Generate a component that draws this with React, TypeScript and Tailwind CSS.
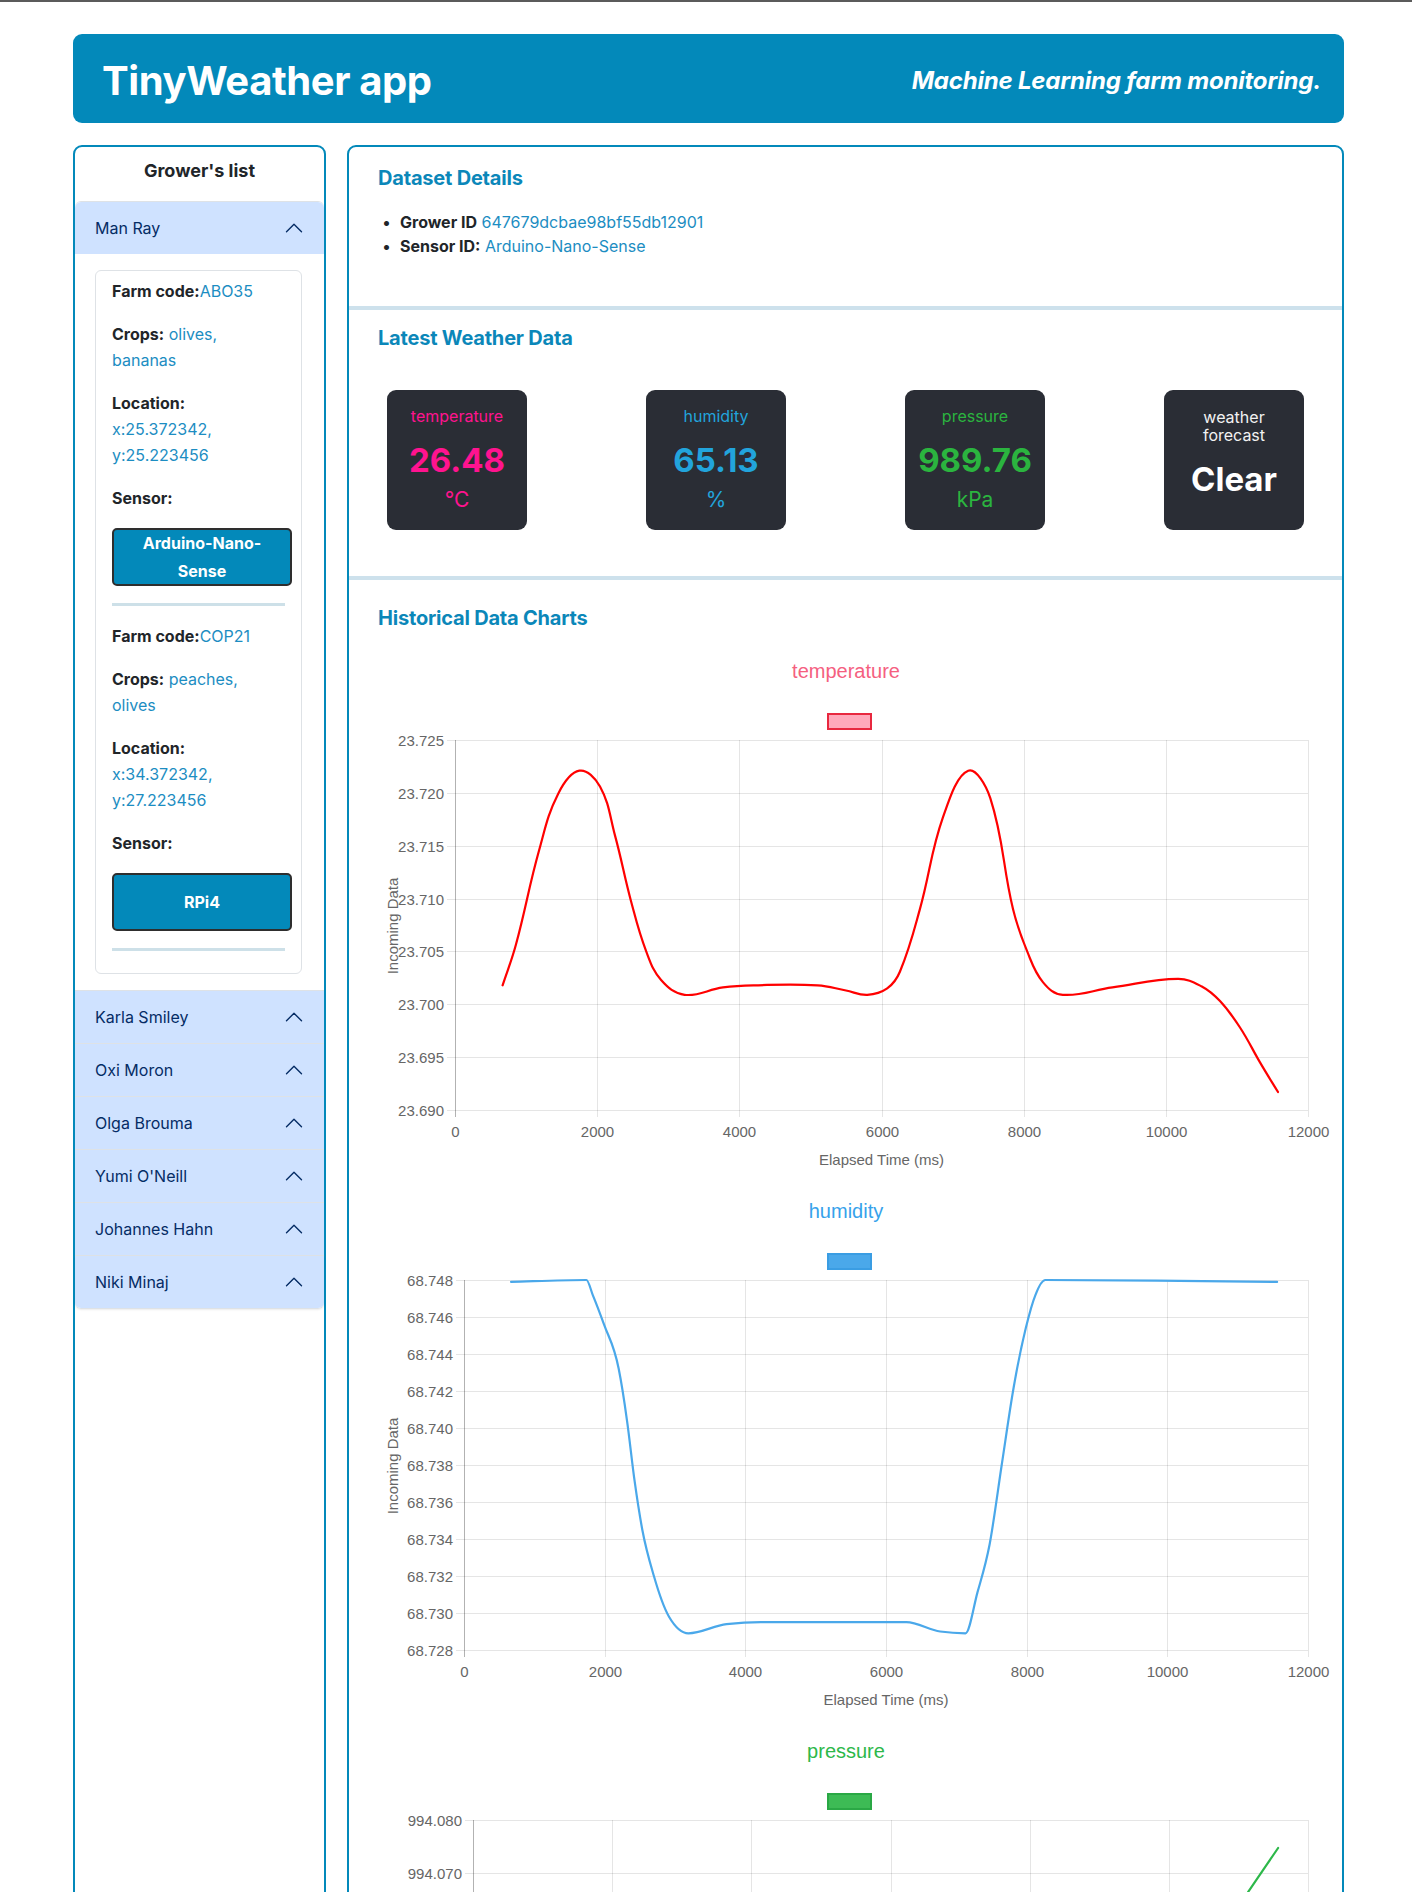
import React from "react";

type Pt = [number, number];

const growers = [
  {
    name: "Man Ray",
    farms: [
      { code: "ABO35", crops: ["olives,", "bananas"], loc: ["x:25.372342,", "y:25.223456"], sensor: "Arduino-Nano-Sense" },
      { code: "COP21", crops: ["peaches,", "olives"], loc: ["x:34.372342,", "y:27.223456"], sensor: "RPi4" },
    ],
  },
  { name: "Karla Smiley", farms: [] },
  { name: "Oxi Moron", farms: [] },
  { name: "Olga Brouma", farms: [] },
  { name: "Yumi O'Neill", farms: [] },
  { name: "Johannes Hahn", farms: [] },
  { name: "Niki Minaj", farms: [] },
];

const readings = [
  { label: "temperature", value: "26.48", unit: "°C", color: "text-[#ff138f]" },
  { label: "humidity", value: "65.13", unit: "%", color: "text-[#22a4dc]" },
  { label: "pressure", value: "989.76", unit: "kPa", color: "text-[#2bb43f]" },
];

const f1 = (v: number) => v.toFixed(1);

// cubic spline like chart.js' default line tension (0.4)
function splinePath(p: Pt[], t = 0.4) {
  const cps = p.map((cur, i) => {
    const prev = p[i - 1] || cur;
    const next = p[i + 1] || cur;
    const d01 = Math.hypot(cur[0] - prev[0], cur[1] - prev[1]);
    const d12 = Math.hypot(next[0] - cur[0], next[1] - cur[1]);
    const sum = d01 + d12 || 1;
    const fa = (t * d01) / sum;
    const fb = (t * d12) / sum;
    return {
      before: [cur[0] - fa * (next[0] - prev[0]), cur[1] - fa * (next[1] - prev[1])] as Pt,
      after: [cur[0] + fb * (next[0] - prev[0]), cur[1] + fb * (next[1] - prev[1])] as Pt,
    };
  });
  let d = `M${f1(p[0][0])},${f1(p[0][1])}`;
  for (let i = 0; i < p.length - 1; i++) {
    const a = cps[i].after;
    const b = cps[i + 1].before;
    d += ` C${f1(a[0])},${f1(a[1])} ${f1(b[0])},${f1(b[1])} ${f1(p[i + 1][0])},${f1(p[i + 1][1])}`;
  }
  return d;
}

// monotone variant, no overshoot on flat stretches
function monotonePath(p: Pt[]) {
  const n = p.length;
  const s: number[] = [];
  for (let i = 0; i < n - 1; i++) s.push((p[i + 1][1] - p[i][1]) / (p[i + 1][0] - p[i][0]));
  const m: number[] = new Array(n);
  m[0] = s[0];
  m[n - 1] = s[n - 2];
  for (let i = 1; i < n - 1; i++) {
    const h0 = p[i][0] - p[i - 1][0];
    const h1 = p[i + 1][0] - p[i][0];
    const s0 = s[i - 1];
    const s1 = s[i];
    if (s0 * s1 <= 0) m[i] = 0;
    else {
      const q = (s0 * h1 + s1 * h0) / (h0 + h1);
      m[i] = (Math.sign(s0) + Math.sign(s1)) * Math.min(Math.abs(s0), Math.abs(s1), 0.5 * Math.abs(q));
    }
  }
  let d = `M${f1(p[0][0])},${f1(p[0][1])}`;
  for (let i = 0; i < n - 1; i++) {
    const dx = (p[i + 1][0] - p[i][0]) / 3;
    d += ` C${f1(p[i][0] + dx)},${f1(p[i][1] + dx * m[i])} ${f1(p[i + 1][0] - dx)},${f1(p[i + 1][1] - dx * m[i + 1])} ${f1(p[i + 1][0])},${f1(p[i + 1][1])}`;
  }
  return d;
}

interface ChartProps {
  title: string;
  titleColor: string;
  lineColor: string;
  boxFill: string;
  boxStroke: string;
  ticks: string[];
  max: number;
  min: number;
  left: number;
  points: Pt[];
  monotone?: boolean;
}

function LineChart({ title, titleColor, lineColor, boxFill, boxStroke, ticks, max, min, left, points, monotone }: ChartProps) {
  const right = 959;
  const top = 90;
  const bottom = 460;
  const sx = (ms: number) => left + (ms / 12000) * (right - left);
  const sy = (v: number) => top + ((max - v) / (max - min)) * (bottom - top);
  const pts = points.map(([ms, v]) => [sx(ms), sy(v)] as Pt);
  const xTicks = [0, 2000, 4000, 6000, 8000, 10000, 12000];

  return (
    <svg width={993} height={540} className="block font-['Liberation_Sans',Arial,sans-serif]">
      <text x={497} y={21} textAnchor="middle" dominantBaseline="central" fontSize={20} fill={titleColor}>
        {title}
      </text>
      <rect x={479} y={64} width={43} height={15} fill={boxFill} stroke={boxStroke} strokeWidth={2} />
      {ticks.map((t, i) => {
        const y = Math.round(top + (i * (bottom - top)) / (ticks.length - 1)) + 0.5;
        return (
          <g key={t}>
            <line x1={left - 8} x2={right} y1={y} y2={y} stroke="rgba(0,0,0,0.1)" />
            <text x={left - 11} y={y} textAnchor="end" dominantBaseline="central" fontSize={15} fill="#666">
              {t}
            </text>
          </g>
        );
      })}
      {xTicks.map((t, i) => {
        const x = Math.round(sx(t)) + 0.5;
        return (
          <g key={t}>
            <line x1={x} x2={x} y1={top} y2={bottom + 7} stroke={i === 0 ? "rgba(0,0,0,0.3)" : "rgba(0,0,0,0.1)"} />
            <text x={x} y={481} textAnchor="middle" dominantBaseline="central" fontSize={15} fill="#666">
              {t}
            </text>
          </g>
        );
      })}
      <text x={(left + right) / 2} y={509} textAnchor="middle" dominantBaseline="central" fontSize={15} fill="#666">
        Elapsed Time (ms)
      </text>
      <text
        transform="translate(43 276) rotate(-90)"
        textAnchor="middle"
        dominantBaseline="central"
        fontSize={15}
        fill="#666"
      >
        Incoming Data
      </text>
      <path
        d={monotone ? monotonePath(pts) : splinePath(pts)}
        fill="none"
        stroke={lineColor}
        strokeWidth={2.2}
        strokeLinecap="round"
      />
    </svg>
  );
}

const tempPoints: Pt[] = [
  [670, 23.7018], [860, 23.7057], [1180, 23.7145], [1450, 23.7199], [1750, 23.7221], [2040, 23.7206],
  [2250, 23.716], [2475, 23.7098], [2690, 23.705], [2900, 23.7023], [3230, 23.7009], [3770, 23.7016],
  [4200, 23.7018], [5100, 23.7018], [5500, 23.7013], [5800, 23.7009], [6080, 23.7015], [6260, 23.7031],
  [6540, 23.709], [6865, 23.7177], [7220, 23.7221], [7530, 23.7195], [7850, 23.709], [8050, 23.705],
  [8270, 23.7021], [8550, 23.7009], [9250, 23.7016], [10170, 23.7024], [10500, 23.7017], [10762, 23.7003],
  [11044, 23.6978], [11325, 23.6945], [11578, 23.6917],
];

const humPoints: Pt[] = [
  [670, 68.7479], [1740, 68.748], [1830, 68.7472], [1990, 68.7456], [2200, 68.7432], [2318, 68.7404],
  [2427, 68.7371], [2535, 68.7345], [2700, 68.732], [2915, 68.7298], [3190, 68.7289], [3732, 68.7294],
  [4223, 68.7295], [6290, 68.7295], [6770, 68.729], [7130, 68.7289], [7300, 68.7311], [7473, 68.7337],
  [7645, 68.738], [7815, 68.7422], [7988, 68.7454], [8125, 68.7472], [8265, 68.748], [11560, 68.7479],
];

const presPoints: Pt[] = [
  [670, 994.03], [1750, 994.028], [3000, 994.035], [4500, 994.04], [6000, 994.038], [7500, 994.045],
  [9000, 994.05], [10200, 994.054], [10700, 994.058], [11140, 994.0664], [11570, 994.0747],
];

function Chevron() {
  return (
    <svg width="20" height="20" viewBox="0 0 16 16" className="rotate-180 shrink-0">
      <path d="M2 5L8 11L14 5" fill="none" stroke="#052c65" strokeWidth="1.1" strokeLinecap="round" strokeLinejoin="round" />
    </svg>
  );
}

function FarmCard({ farms }: { farms: typeof growers[0]["farms"] }) {
  return (
    <div className="border border-[#dee2e6] rounded-[6px] px-4 pt-[7px] pb-[5px] text-[16px] leading-[26px]">
      {farms.map((f) => (
        <div key={f.code}>
          <p className="mb-[17px] pr-[6px]">
            <b>Farm code:</b>
            <span className="text-[#1c8dc2]">{f.code}</span>
          </p>
          <p className="mb-[17px] pr-[6px]">
            <b>Crops:</b> <span className="text-[#1c8dc2]">{f.crops[0]}</span>
            <br />
            <span className="text-[#1c8dc2]">{f.crops[1]}</span>
          </p>
          <p className="mb-[17px] pr-[6px]">
            <b>Location:</b>
            <br />
            <span className="text-[#1c8dc2]">{f.loc[0]}</span>
            <br />
            <span className="text-[#1c8dc2]">{f.loc[1]}</span>
          </p>
          <p className="mb-[17px]">
            <b>Sensor:</b>
          </p>
          <button className="w-[180px] h-[58px] px-3 flex items-center justify-center bg-[#0389ba] border-2 border-[#2e2e2e] rounded-[5px] text-white font-bold leading-[28px] text-center">
            {f.sensor}
          </button>
          <div className="mt-[17px] mb-[17px] h-[3px] bg-[#cde0e8]" />
        </div>
      ))}
    </div>
  );
}

export default function App() {
  return (
    <div className="min-h-screen bg-white border-t-2 border-[#5b5b5b] font-['Inter',sans-serif] text-[#212529]">
      <div className="ml-[73px] w-[1271px] pt-[32px] pb-10">
        <header className="h-[89px] rounded-[9px] bg-[#0389ba] flex items-center justify-between pl-[29px] pr-[23px] pt-[4px] text-white">
          <h1 className="text-[40px] font-bold leading-none tracking-[-0.4px]">TinyWeather app</h1>
          <p className="text-[24px] font-bold italic tracking-[-0.2px]">Machine Learning farm monitoring.</p>
        </header>

        <div className="mt-[22px] flex gap-[21px] items-stretch">
          <aside className="w-[253px] shrink-0 border-2 border-[#0389ba] rounded-[9px]">
            <div className="h-[54px] pt-[13px] text-center text-[18px] leading-[22px] font-bold">Grower's list</div>
            <div>
              {growers.map((g, i) => (
                <div
                  key={g.name}
                  className={`border-b border-[#dee2e6] ${i === 0 ? "border-t rounded-t-[6px]" : ""} ${
                    i === growers.length - 1 ? "rounded-b-[6px] overflow-hidden shadow-[0_1px_2px_rgba(0,0,0,0.08)]" : ""
                  }`}
                >
                  <div
                    className={`h-[52px] bg-[#cfe2ff] flex items-center justify-between pl-5 pr-5 text-[16px] text-[#052c65] ${
                      i === 0 ? "rounded-t-[6px]" : ""
                    }`}
                  >
                    <span>{g.name}</span>
                    <Chevron />
                  </div>
                  {g.farms.length > 0 && (
                    <div className="pl-5 pr-[22px] pt-4 pb-4">
                      <FarmCard farms={g.farms} />
                    </div>
                  )}
                </div>
              ))}
            </div>
          </aside>

          <main className="flex-1 border-2 border-[#0389ba] rounded-[9px] overflow-hidden">
            <section className="pt-[19px] pb-[48px] pl-[29px]">
              <h2 className="text-[20px] leading-[24px] font-bold text-[#0b87b9] tracking-[-0.2px]">Dataset Details</h2>
              <ul className="mt-[20px] ml-[1px] text-[16px] leading-[24px]">
                <li className="flex">
                  <span className="w-[21px] pl-[3px]">•</span>
                  <span>
                    <b>Grower ID</b> <span className="text-[#1c8dc2]">647679dcbae98bf55db12901</span>
                  </span>
                </li>
                <li className="flex">
                  <span className="w-[21px] pl-[3px]">•</span>
                  <span>
                    <b>Sensor ID:</b> <span className="text-[#1c8dc2]">Arduino-Nano-Sense</span>
                  </span>
                </li>
              </ul>
            </section>
            <div className="h-[4px] bg-[#cde1ec]" />

            <section className="pt-[16px] pb-[46px]">
              <h2 className="pl-[29px] text-[20px] leading-[24px] font-bold text-[#0b87b9] tracking-[-0.2px]">Latest Weather Data</h2>
              <div className="mt-[40px] flex justify-between px-[38px]">
                {readings.map((r) => (
                  <div key={r.label} className={`w-[140px] h-[140px] rounded-[9px] bg-[#2a2d35] flex flex-col items-center pt-[17px] ${r.color}`}>
                    <div className="text-[16px] leading-[19px]">{r.label}</div>
                    <div className="mt-[15px] text-[33px] leading-[38px] font-bold">{r.value}</div>
                    <div className="mt-[8px] text-[21px] leading-[25px]">{r.unit}</div>
                  </div>
                ))}
                <div className="w-[140px] h-[140px] rounded-[9px] bg-[#2a2d35] flex flex-col items-center pt-[18px] px-[16px] text-white">
                  <div className="text-[16px] leading-[18.4px] text-center text-[#f2f2f2]">weather forecast</div>
                  <div className="mt-[15px] text-[33px] leading-[38px] font-bold">Clear</div>
                </div>
              </div>
            </section>
            <div className="h-[4px] bg-[#cde1ec]" />

            <section className="pt-[26px] pb-[20px]">
              <h2 className="pl-[29px] text-[20px] leading-[24px] font-bold text-[#0b87b9] tracking-[-0.2px]">Historical Data Charts</h2>
              <div className="mt-[20px] flex flex-col">
                <LineChart
                  title="temperature"
                  titleColor="#f5607f"
                  lineColor="#ff0000"
                  boxFill="rgba(255,99,132,0.55)"
                  boxStroke="#e8283f"
                  ticks={["23.725", "23.720", "23.715", "23.710", "23.705", "23.700", "23.695", "23.690"]}
                  max={23.725}
                  min={23.69}
                  left={106}
                  points={tempPoints}
                />
                <LineChart
                  title="humidity"
                  titleColor="#36a2eb"
                  lineColor="#4aa8ea"
                  boxFill="#4aa8ea"
                  boxStroke="#3a9de3"
                  ticks={["68.748", "68.746", "68.744", "68.742", "68.740", "68.738", "68.736", "68.734", "68.732", "68.730", "68.728"]}
                  max={68.748}
                  min={68.728}
                  left={115}
                  points={humPoints}
                  monotone
                />
                <LineChart
                  title="pressure"
                  titleColor="#2db84a"
                  lineColor="#2db84a"
                  boxFill="#3dbb55"
                  boxStroke="#2aa845"
                  ticks={["994.080", "994.070", "994.060", "994.050", "994.040", "994.030", "994.020", "994.010"]}
                  max={994.08}
                  min={994.01}
                  left={124}
                  points={presPoints}
                  monotone
                />
              </div>
            </section>
          </main>
        </div>
      </div>
    </div>
  );
}
